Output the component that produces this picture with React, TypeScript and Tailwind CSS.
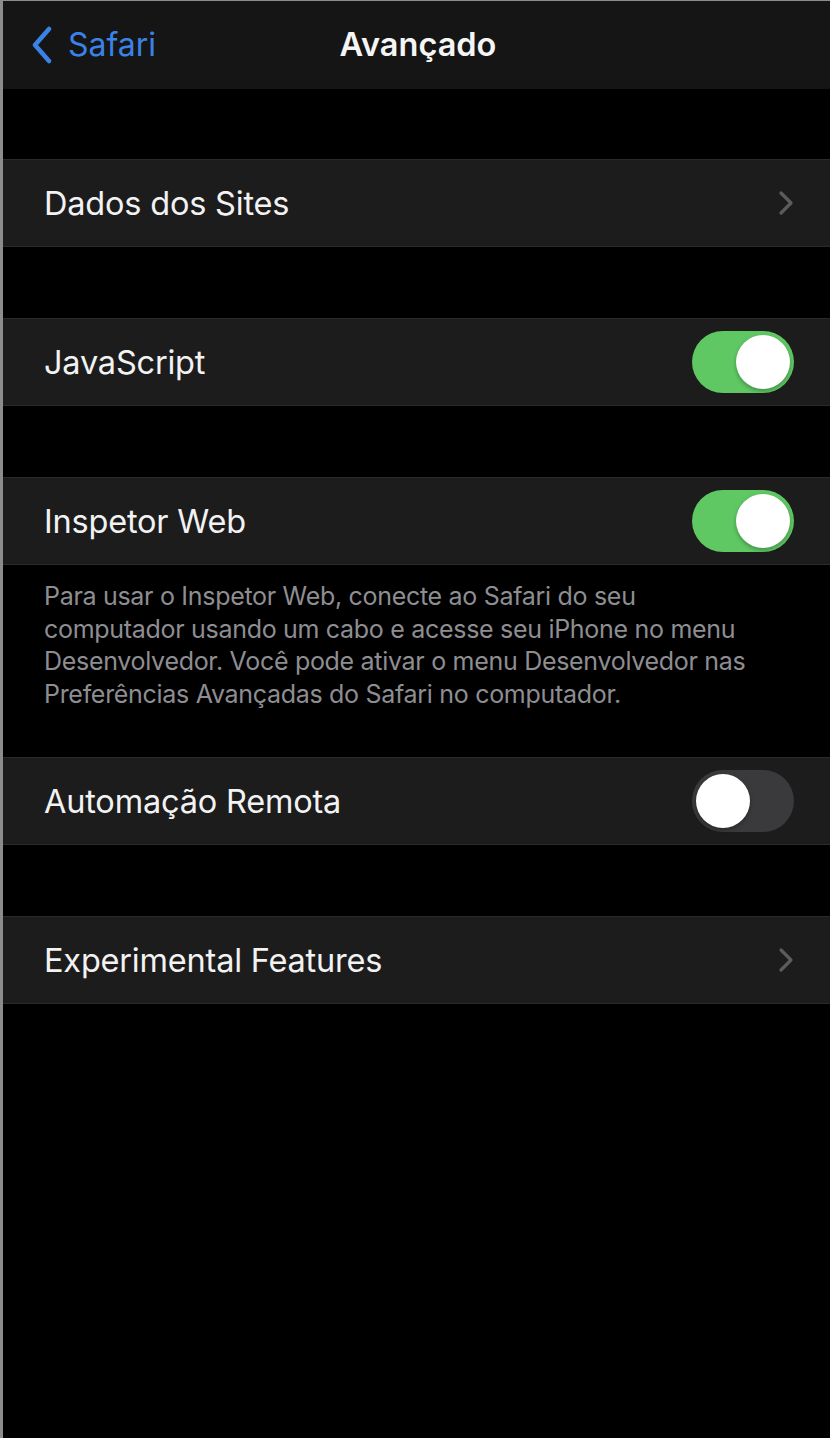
import React from "react";

const font = { fontFamily: 'Inter, "Noto Sans", "Liberation Sans", sans-serif' };

function Toggle({ on }: { on: boolean }) {
  return (
    <div
      className={`flex h-[62px] w-[102px] items-center rounded-full px-[4px] ${
        on ? "justify-end bg-[#5fc863]" : "justify-start bg-[#3a3a3c]"
      }`}
    >
      <div className="h-[54px] w-[54px] rounded-full bg-white shadow-[0_2px_4px_rgba(0,0,0,0.3)]" />
    </div>
  );
}

function Chevron() {
  return (
    <svg width="16" height="26" viewBox="0 0 16 26" fill="none">
      <path d="M3 3 L13 13 L3 23" stroke="#5c5c60" strokeWidth="3.2" strokeLinecap="round" strokeLinejoin="round" />
    </svg>
  );
}

function Row({ label, right }: { label: string; right: React.ReactNode }) {
  return (
    <div className="flex h-[88px] items-center justify-between border-y border-[#2a2a2b] bg-[#1c1c1d] pl-[41px] pr-[36px]">
      <span className="pt-[3px] text-[32.5px] tracking-[-0.2px] text-[#f2f2f2]">{label}</span>
      {right}
    </div>
  );
}

export default function App() {
  return (
    <div className="min-h-[1438px] border-l-[3px] border-t border-[#8c8c8c] bg-black" style={font}>
      <div className="relative flex h-[88px] items-center bg-[#151515]">
        <div className="flex items-center pl-[27px]">
          <svg width="24" height="38" viewBox="0 0 24 38" fill="none">
            <path d="M19 3 L5 19 L19 35" stroke="#3b82e6" strokeWidth="4.5" strokeLinecap="round" strokeLinejoin="round" />
          </svg>
          <span className="ml-[14px] text-[32px] text-[#3b82e6]">Safari</span>
        </div>
        <div className="pointer-events-none absolute inset-x-0 top-0 flex h-full items-center justify-center">
          <span className="pl-[3px] text-[32.5px] font-semibold text-[#f5f5f5]">Avançado</span>
        </div>
      </div>
      <div className="h-[70px]" />
      <Row label="Dados dos Sites" right={<Chevron />} />
      <div className="h-[71px]" />
      <Row label="JavaScript" right={<Toggle on />} />
      <div className="h-[71px]" />
      <Row label="Inspetor Web" right={<Toggle on />} />
      <div className="h-[192px] pl-[41px] pr-[20px] pt-[15px] text-[25px] leading-[32.5px] tracking-[-0.3px] text-[#8e8e92]">
        Para usar o Inspetor Web, conecte ao Safari do seu
        <br />
        computador usando um cabo e acesse seu iPhone no menu
        <br />
        Desenvolvedor. Você pode ativar o menu Desenvolvedor nas
        <br />
        Preferências Avançadas do Safari no computador.
      </div>
      <Row label="Automação Remota" right={<Toggle on={false} />} />
      <div className="h-[71px]" />
      <Row label="Experimental Features" right={<Chevron />} />
    </div>
  );
}
